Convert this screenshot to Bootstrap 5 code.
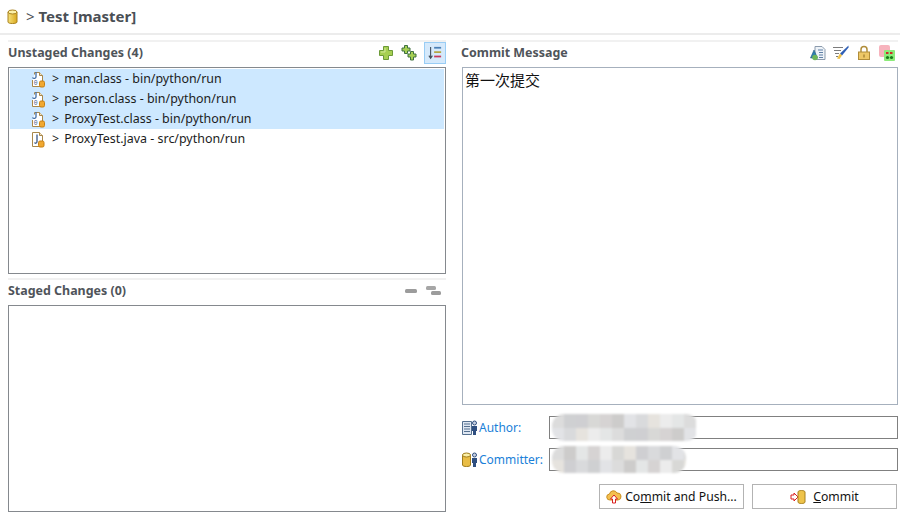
<!DOCTYPE html>
<html lang="zh-CN">
<head>
  <meta charset="UTF-8">
  <meta name="viewport" content="width=device-width, initial-scale=1.0">
  <title>Git Staging</title>
  <link href="https://cdn.jsdelivr.net/npm/bootstrap@5.3.0/dist/css/bootstrap.min.css" rel="stylesheet">
  <style>
    html, body { height: 100%; overflow: hidden; }
    body { font-family: "Noto Sans", "Noto Sans CJK SC", sans-serif; font-size: 12.45px; color: #1c1c1c; background: #fff; }
    .stage-head { height: 33px; padding-left: 7px; border-bottom: 2px solid #ececec; box-sizing: content-box; font-size: 15px; font-weight: 700; color: #4a4f55; gap: 7px; }
    .stage-head .chev { font-weight: 400; margin-left: 1px; }
    .stage-main { padding: 5px 2px 3px 8px; gap: 16px; height: 480px; }
    .stage-left { width: 438px; }
    .stage-right { width: 436px; }
    .sec-head { height: 27px; border-top: 2px solid #f1f1f1; font-weight: 700; color: #4f545a; padding-bottom: 3px; }
    .msg-title { margin-left: -1px; }
    .tool-set { gap: 7px; }
    .tool-set-msg { padding-right: 3px; }
    .tool-btn { width: 16px; height: 16px; display: block; }
    .tool-on { width: 22px; height: 22px; padding: 3px; background: #d5e9fb; border: 1px solid #99cdf5; }
    .file-box { border: 1px solid #85898e; background: #fff; }
    .file-box-a { height: 207px; padding: 1px; }
    .file-box-b { height: 207px; }
    .split-gap { height: 4px; }
    .file-row { height: 20px; padding-left: 20px; gap: 5px; white-space: nowrap; }
    .file-on { background: #cde8ff; }
    .msg-box { height: 338px; border: 1px solid #a6b0bd; padding: 1px 2px; font-family: "Noto Sans CJK SC", sans-serif; font-size: 15px; color: #111; }
    .who-row { margin-top: 11px; height: 23px; }
    .who-row + .who-row { margin-top: 9px; }
    .who-lab { width: 87px; color: #1a7fd8; gap: 1px; font-size: 12px; padding-top: 1px; }
    .who-val { border: 1px solid #808080; overflow: visible; }
    .who-blur { height: 27px; margin: -3px 0 0 2px; border-radius: 12px; filter: blur(1px); display: grid; grid-template-rows: 1fr 1fr; grid-auto-flow: column; grid-auto-columns: 12px; overflow: hidden; }
    .who-blur i { display: block; }
    .act-row { margin-top: 13px; gap: 8px; padding-right: 1px; }
    .act-btn { height: 25px; border: 1px solid #b3b3b3; border-radius: 0; background: #fff; font-size: 12.2px; color: #111; padding: 1px 0 0; gap: 3px; }
    .act-btn:hover { background: #fff; border-color: #b3b3b3; color: #111; }
    .act-wide { width: 145px; }
  </style>
</head>
<body>
  <div class="stage-head d-flex align-items-center">
    <svg width="11" height="16" viewBox="0 0 11 16"><defs><linearGradient id="cylA" x1="0" x2="1"><stop offset="0" stop-color="#f7e27a"/><stop offset="1" stop-color="#d9a81f"/></linearGradient></defs><path d="M1 3v10c0 2 9 2 9 0V3z" fill="url(#cylA)" stroke="#a8801c"/><ellipse cx="5.5" cy="3" rx="4.5" ry="2" fill="#fbf0a8" stroke="#a8801c"/></svg>
    <div><span class="chev">&gt;</span> Test [master]</div>
  </div>

  <div class="stage-main d-flex">
    <div class="stage-left d-flex flex-column">
      <div class="sec-head d-flex justify-content-between align-items-center">
        <span>Unstaged Changes (4)</span>
        <div class="d-flex align-items-center tool-set">
          <svg class="tool-btn" viewBox="0 0 16 16"><path d="M5.500 1.500h5v4h4v5h-4v4h-5v-4h-4v-5h4z" fill="#a6cf52" stroke="#6c9a38"/><path d="M7 3v4H3" fill="none" stroke="#d3e89c"/></svg>
          <svg class="tool-btn" viewBox="0 0 16 16"><path d="M3.500 .5h3v2.500H9v3H6.500v2.500h-3V6H1V3h2.500z" fill="#a6cf52" stroke="#3f7040"/><path d="M9.500 6.500h3V9H15v3h-2.500v3h-3v-3H7V9h2.500z" fill="#a6cf52" stroke="#3f7040"/></svg>
          <svg class="tool-btn tool-on" viewBox="0 0 16 16"><path d="M3 1v13M1 11l2 3 2-3" fill="none" stroke="#3d4a58" stroke-width="1.2"/><path d="M7 2h8" stroke="#4a7fb5" stroke-width="2"/><path d="M7 7h8" stroke="#b5a642" stroke-width="2"/><path d="M7 12h8" stroke="#c8385a" stroke-width="2"/></svg>
        </div>
      </div>
      <div class="file-box file-box-a">
        <div class="file-row file-on d-flex align-items-center">
          <svg width="17" height="17" viewBox="0 0 17 17"><use href="#clsIcon"/></svg><span>&gt;</span><span>man.class - bin/python/run</span>
        </div>
        <div class="file-row file-on d-flex align-items-center">
          <svg width="17" height="17" viewBox="0 0 17 17"><use href="#clsIcon"/></svg><span>&gt;</span><span>person.class - bin/python/run</span>
        </div>
        <div class="file-row file-on d-flex align-items-center">
          <svg width="17" height="17" viewBox="0 0 17 17"><use href="#clsIcon"/></svg><span>&gt;</span><span>ProxyTest.class - bin/python/run</span>
        </div>
        <div class="file-row d-flex align-items-center">
          <svg width="17" height="17" viewBox="0 0 17 17"><path d="M2.500 1.500h7l3 3v11h-10z" fill="#fff" stroke="#a8874a"/><path d="M9.500 1.500v3h3" fill="#f3e6c4" stroke="#a8874a"/><path d="M7 3.500v7c0 2-2 2-2.500 1" fill="none" stroke="#46638f" stroke-width="1.400"/><rect x="8.500" y="10" width="5.500" height="6" rx="1.500" fill="#f0a830" stroke="#c67f12"/></svg><span>&gt;</span><span>ProxyTest.java - src/python/run</span>
        </div>
      </div>
      <div class="split-gap"></div>
      <div class="sec-head d-flex justify-content-between align-items-center">
        <span>Staged Changes (0)</span>
        <div class="d-flex align-items-center tool-set me-1">
          <svg class="tool-btn" viewBox="0 0 16 16"><rect x="2" y="6" width="12" height="4" rx="1.500" fill="#9c9c9c"/></svg>
          <svg class="tool-btn" viewBox="0 0 16 16"><rect x="0" y="3" width="10" height="4" rx="1.500" fill="#a6a6a6"/><rect x="5" y="8" width="10" height="4" rx="1.500" fill="#9c9c9c"/></svg>
        </div>
      </div>
      <div class="file-box file-box-b"></div>
    </div>

    <div class="stage-right d-flex flex-column">
      <div class="sec-head d-flex justify-content-between align-items-center">
        <span class="msg-title">Commit Message</span>
        <div class="d-flex align-items-center tool-set tool-set-msg">
          <svg class="tool-btn" viewBox="0 0 16 16"><path d="M5 1.500h7l3 3v10H5z" fill="#eef3f8" stroke="#8c9bad"/><path d="M8 5h5M9 7.500h4M9 10h4M9 12.500h4" stroke="#5f7fa5"/><path d="M4 5l3.500 8H.5z" fill="#2f7fb0" stroke="#1f5a7a" stroke-width=".6"/><circle cx="5" cy="12.500" r="2.800" fill="#6fb65a"/></svg>
          <svg class="tool-btn" viewBox="0 0 16 16"><path d="M0 2.500h10M1 5.500h7M2 8.500h4M3 11.500h2" stroke="#7c7c7c"/><path d="M15.500 .5L7 8.500l2 2 6.500-8z" fill="#2f5fb5"/><path d="M7 8.500l2 2-2.500 3.500-2.500-.5z" fill="#efc24a"/></svg>
          <svg class="tool-btn" viewBox="0 0 16 16"><path d="M5 7V4.500a3 3 0 0 1 6 0V7" fill="none" stroke="#b08d3a" stroke-width="1.500"/><rect x="2.500" y="7" width="11" height="7.500" fill="#edc766" stroke="#b08d3a"/><rect x="7.500" y="9.500" width="1" height="3" fill="#8a6a20"/></svg>
          <svg class="tool-btn" viewBox="0 0 16 16"><rect x="0" y="0" width="11" height="12" rx="2" fill="#f7b3bd"/><rect x="5" y="5" width="11" height="11" rx="1" fill="#8ceb7a"/><path d="M7 8h2.500M11 8h2.500" stroke="#d12a2a" stroke-width="2"/><circle cx="8.500" cy="12.500" r="1.600" fill="#1a7a1a"/><circle cx="12.500" cy="12.500" r="1.600" fill="#1a7a1a"/></svg>
        </div>
      </div>
      <div class="msg-box">第一次提交</div>

      <div class="who-row d-flex">
        <div class="who-lab d-flex align-items-center">
          <svg width="16" height="16" viewBox="0 0 16 16"><use href="#whoDoc"/></svg><span>Author:</span>
        </div>
        <div class="who-val flex-grow-1"><div class="who-blur" id="blurA" style="width:146px"></div></div>
      </div>
      <div class="who-row d-flex">
        <div class="who-lab d-flex align-items-center">
          <svg width="16" height="16" viewBox="0 0 16 16"><use href="#whoCyl"/></svg><span>Committer:</span>
        </div>
        <div class="who-val flex-grow-1"><div class="who-blur" id="blurB" style="width:134px"></div></div>
      </div>

      <div class="act-row d-flex justify-content-end">
        <button type="button" class="btn act-btn act-wide d-flex align-items-center justify-content-center">
          <svg width="16" height="16" viewBox="0 0 16 16"><path d="M4 11a3 3 0 0 1-.5-6 4 4 0 0 1 7.500-1 3.500 3.500 0 0 1 1 7z" fill="#f4bf4f" stroke="#c98f22"/><path d="M8 6l3.500 4H9.500v4h-3v-4H4.500z" fill="#fff" stroke="#d92020"/></svg>
          <span>Co<u>m</u>mit and Push...</span>
        </button>
        <button type="button" class="btn act-btn act-wide d-flex align-items-center justify-content-center">
          <svg width="16" height="16" viewBox="0 0 16 16"><path d="M1 6h3V4l4 4-4 4v-2H1z" fill="#fff" stroke="#d92020"/><path d="M8 3c0-2 7-2 7 0v10c0 2-7 2-7 0z" fill="#eec34a" stroke="#a8801c"/></svg>
          <span class="ms-1"><u>C</u>ommit</span>
        </button>
      </div>
    </div>
  </div>

  <svg width="0" height="0" class="position-absolute">
    <defs>
      <g id="clsIcon">
        <path d="M4.500 3.500v-2h5l3 3v11h-10V9" fill="#fff" stroke="#a8874a"/>
        <path d="M9.500 1.500v3h3" fill="#f3e6c4" stroke="#a8874a"/>
        <path d="M6 1v5c0 1.500-2.500 2-3.500.5" fill="none" stroke="#3f6ea8" stroke-width="1.300"/>
        <text x="3.800" y="14" font-size="6.500" font-family="Liberation Mono" fill="#41618f">0</text>
        <rect x="9.500" y="10" width="5" height="6" rx="1.500" fill="#f0a830" stroke="#c67f12"/>
      </g>
      <g id="whoDoc">
        <path d="M.5 1.500h9v13h-9z" fill="#dfe7f2" stroke="#55708f"/>
        <path d="M2 4h6M2 6.500h6M2 9h6M2 11.500h6" stroke="#55708f"/>
        <circle cx="12.500" cy="3" r="2" fill="#c8d0e0" stroke="#2f4f80"/>
        <path d="M10 6h5v5h-1v4h-3v-4h-1z" fill="#2f4f80"/>
      </g>
      <g id="whoCyl">
        <path d="M.5 3v10c0 2 8 2 8 0V3z" fill="#e9bd45" stroke="#a07c1c"/>
        <ellipse cx="4.500" cy="3" rx="4" ry="2" fill="#fbf0a8" stroke="#a07c1c"/>
        <circle cx="12.500" cy="3" r="2" fill="#c8d0e0" stroke="#2f4f80"/>
        <path d="M10 6h5v5h-1v4h-3v-4h-1z" fill="#2f4f80"/>
      </g>
    </defs>
  </svg>

  <script>
    // pixelated name fields
    const tones = ['#dcdcdc', '#cfcfd2', '#d6d3d3', '#e2e3e6', '#e6e3de', '#e4e6e6', '#cfd0d2', '#d8d8d6', '#cdcccb', '#d9dadc', '#ececec'];
    ['blurA', 'blurB'].forEach((id, n) => {
      const box = document.getElementById(id);
      for (let i = 0; i < 24; i++) {
        const cell = document.createElement('i');
        cell.style.background = tones[(i * (n + 3)) % tones.length];
        box.appendChild(cell);
      }
    });
  </script>
  <script src="https://cdn.jsdelivr.net/npm/bootstrap@5.3.0/dist/js/bootstrap.bundle.min.js"></script>
</body>
</html>
